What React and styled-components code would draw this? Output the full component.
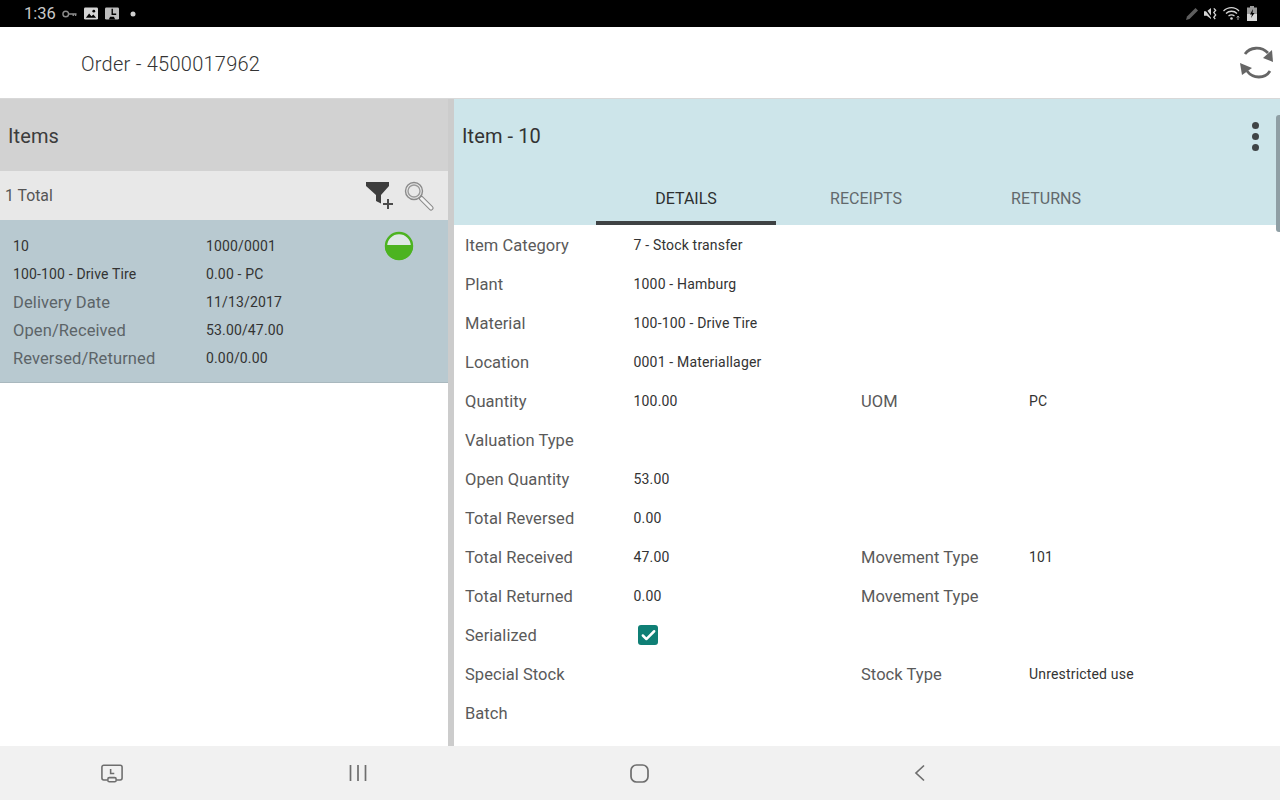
import React from "react";
import styled, { createGlobalStyle } from "styled-components";
import { Check } from "lucide-react";

const Global = createGlobalStyle`
  html, body { margin: 0; padding: 0; height: 100%; overflow: hidden; background: #fff; }
  body { font-family: Roboto, "Liberation Sans", sans-serif; }
`;

const Page = styled.div`
  width: 1280px;
  height: 800px;
  display: flex;
  flex-direction: column;
  overflow: hidden;
`;

const StatusBar = styled.div`
  height: 27px;
  flex: none;
  background: #000;
  display: flex;
  align-items: center;
  justify-content: space-between;
  padding: 0 23px 0 24px;
  color: #c9c9c9;
`;
const StatusGroup = styled.div`
  display: flex;
  align-items: center;
  gap: ${(p) => p.$gap || 6}px;
`;
const Clock = styled.span`
  font-size: 16.5px;
`;

const TopBar = styled.div`
  height: 71px;
  flex: none;
  background: #fff;
  border-bottom: 1px solid #d8d8d8;
  display: flex;
  align-items: center;
  justify-content: space-between;
  padding: 0 6px 0 81px;
`;
const OrderTitle = styled.div`
  font-size: 20px;
  font-weight: 300;
  color: #333;
  letter-spacing: 0.25px;
  padding-top: 2px;
`;

const Main = styled.div`
  flex: 1;
  min-height: 0;
  display: flex;
`;
const LeftPane = styled.div`
  width: 448px;
  flex: none;
  border-right: 6px solid #cccccc;
`;
const ItemsHead = styled.div`
  height: 72px;
  box-sizing: border-box;
  padding: 2px 0 0 8px;
  background: #d2d2d2;
  display: flex;
  align-items: center;
  font-size: 20px;
  color: #3c3c3c;
  letter-spacing: 0.1px;
`;
const ToolRow = styled.div`
  height: 49px;
  background: #e8e8e8;
  display: flex;
  align-items: center;
  justify-content: space-between;
  padding: 0 14px 0 5px;
  font-size: 15.8px;
  color: #555;
`;
const ToolIcons = styled.div`
  display: flex;
  align-items: center;
  gap: 9px;
  svg {
    display: block;
  }
`;
const ItemCard = styled.div`
  height: 163px;
  box-sizing: border-box;
  background: #b8c9d0;
  border-bottom: 1px solid #a9b8be;
  padding: 12px 0 0 13px;
  display: grid;
  grid-template-columns: 193px 179px 1fr;
  grid-auto-rows: 28px;
  align-items: center;
  font-size: 14px;
  letter-spacing: 0.15px;
  color: #333;
`;
const CardLabel = styled.span`
  font-size: 16.5px;
  letter-spacing: 0.1px;
  color: #5c6468;
`;
const StatusDot = styled.svg`
  display: block;
  margin-left: -1px;
`;

const RightPane = styled.div`
  flex: 1;
  min-width: 0;
  display: flex;
  flex-direction: column;
  position: relative;
`;
const ItemHead = styled.div`
  height: 126px;
  flex: none;
  background: #cde5ea;
  display: flex;
  flex-direction: column;
`;
const ItemHeadTop = styled.div`
  height: 74px;
  display: flex;
  align-items: center;
  justify-content: space-between;
  padding: 0 21px 0 8px;
  font-size: 20px;
  letter-spacing: 0.1px;
  color: #333;
`;
const Dots = styled.div`
  display: flex;
  flex-direction: column;
  gap: 4px;
  span {
    width: 7px;
    height: 7px;
    border-radius: 50%;
    background: #3f4446;
  }
`;
const Tabs = styled.div`
  height: 52px;
  display: flex;
  padding-left: 142px;
`;
const Tab = styled.div`
  width: 180px;
  box-sizing: border-box;
  display: flex;
  align-items: center;
  justify-content: center;
  padding-top: 2px;
  font-size: 16px;
  color: ${(p) => (p.$active ? "#2c2f30" : "#62696c")};
  border-bottom: 4px solid ${(p) => (p.$active ? "#3f4244" : "transparent")};
`;
const Details = styled.div`
  flex: 1;
  min-height: 0;
  overflow: hidden;
  padding: 1px 0 0 11px;
`;
const Row = styled.div`
  height: 39px;
  display: grid;
  grid-template-columns: 168.5px 227.5px 168px 1fr;
  align-items: center;
`;
const Label = styled.span`
  font-size: 16.5px;
  letter-spacing: 0.05px;
  color: #5a5a5a;
`;
const Value = styled.span`
  font-size: 14px;
  letter-spacing: 0.18px;
  color: #333;
  margin-top: -1px;
`;
const CheckBox = styled.span`
  width: 20px;
  height: 20px;
  margin: -1px 0 0 4.5px;
  border-radius: 3px;
  background: #0f7f75;
  display: flex;
  align-items: center;
  justify-content: center;
  color: #fff;
`;
const Scrollbar = styled.div`
  position: absolute;
  right: 0;
  top: 16px;
  width: 4px;
  height: 117px;
  border-radius: 3px 0 0 3px;
  background: #8f9fa5;
`;

const NavBar = styled.div`
  height: 54px;
  flex: none;
  background: #f1f1f1;
  display: grid;
  grid-template-columns: 224px 268px 294px 268px 1fr;
  align-items: center;
`;
const NavSlot = styled.div`
  display: flex;
  justify-content: center;
`;

const rows = [
  ["Item Category", "7 - Stock transfer"],
  ["Plant", "1000 - Hamburg"],
  ["Material", "100-100 - Drive Tire"],
  ["Location", "0001 - Materiallager"],
  ["Quantity", "100.00", "UOM", "PC"],
  ["Valuation Type", ""],
  ["Open Quantity", "53.00"],
  ["Total Reversed", "0.00"],
  ["Total Received", "47.00", "Movement Type", "101"],
  ["Total Returned", "0.00", "Movement Type", ""],
  ["Serialized", "check"],
  ["Special Stock", "", "Stock Type", "Unrestricted use"],
  ["Batch", ""],
  ["Bulk", ""],
];

function StatusLeftIcons() {
  return (
    <StatusGroup $gap={7}>
      <svg width="15" height="10" viewBox="0 0 16 10" fill="none" stroke="#8c8c8c" strokeWidth="1.5">
        <circle cx="4" cy="5" r="3" />
        <path d="M7 5h8.500M12 5v2M14.500 5v2" />
      </svg>
      <svg width="14" height="13" viewBox="0 0 15 13">
        <rect width="15" height="13" rx="1.500" fill="#d4d4d4" />
        <path d="M2 11l3.500-4.500 2.500 3 2-2 3 3.500z" fill="#000" />
        <circle cx="10.500" cy="4" r="1.500" fill="#000" />
      </svg>
      <svg width="14" height="13" viewBox="0 0 15 13">
        <rect width="15" height="13" rx="1.500" fill="#bdbdbd" />
        <path d="M7 1.500h1.500v5H12v1.500H7z" fill="#000" />
        <path d="M4 13l1.500-3h4L11 13z" fill="#000" />
      </svg>
      <svg width="6" height="6" viewBox="0 0 6 6" style={{ marginLeft: 4 }}>
        <circle cx="3" cy="3" r="2.500" fill="#d0d0d0" />
      </svg>
    </StatusGroup>
  );
}

function StatusRightIcons() {
  return (
    <StatusGroup $gap={5}>
      <svg width="14" height="14" viewBox="0 0 14 14">
        <path d="M1 13l1-3.500L10.500 1 13 3.500 4.500 12z" fill="#5e5e5e" />
      </svg>
      <svg width="14" height="15" viewBox="0 0 15 14">
        <path d="M0 4.500h3L7.500 1v12L3 9.500H0z" fill="#d4d4d4" />
        <path d="M0.500 1l9 12" stroke="#000" strokeWidth="1.500" />
        <path d="M10.500 1.500l2 2-2 2.500 2 2.500-2 2.500 1.500 2" fill="none" stroke="#d4d4d4" strokeWidth="1.400" />
      </svg>
      <svg width="19" height="15" viewBox="0 0 19 15" fill="none" stroke="#d4d4d4" strokeWidth="1.300">
        <path d="M0.500 5C5 0.500 12 0.500 16 5M3 7.500c3-3 8-3 11 0M5.500 10c2-1.500 4-1.500 6 0" />
        <circle cx="8.500" cy="12.500" r="1.300" fill="#d4d4d4" stroke="none" />
        <path d="M15 14v-4M13.800 11.500l1.200-1.500 1.200 1.500" stroke="#a0a0a0" strokeWidth="1" />
      </svg>
      <svg width="10" height="15" viewBox="0 0 10 15">
        <path d="M3 0h4v1.500h3V15H0V1.500h3z" fill="#9a9a9a" />
        <path d="M0 8h10v7H0z" fill="#d8d8d8" />
        <path d="M6 3L3 8.500h2L4 12l3.500-5h-2z" fill="#000" />
      </svg>
    </StatusGroup>
  );
}

function SyncIcon() {
  return (
    <svg width="34" height="34" viewBox="0 0 34 34" fill="none" stroke="#666" strokeWidth="2.800">
      <path d="M5 8C10 1 21 0 28 7" />
      <path d="M32 4l1 12-10-4z" fill="#666" stroke="none" />
      <path d="M30 25C25 33 13 33 7 25" />
      <path d="M0 17l2 12 10-7z" fill="#666" stroke="none" />
    </svg>
  );
}

function FilterIcon() {
  return (
    <svg width="30" height="30" viewBox="0 0 30 30">
      <path d="M1 1h23v4l-8 9v8.500l-5-2.500v-6L1 5z" fill="#3d3d3d" />
      <path d="M23 18v10M18 23h10" stroke="#4b4b4b" strokeWidth="2" />
    </svg>
  );
}

function LensIcon() {
  return (
    <svg width="30" height="30" viewBox="0 0 30 30" fill="none">
      <path d="M17 17l10 10" stroke="#8a8a8a" strokeWidth="5" strokeLinecap="round" />
      <path d="M17.500 17.500l9.500 9.500" stroke="#f2f2f2" strokeWidth="3" strokeLinecap="round" />
      <circle cx="10" cy="10" r="8.500" stroke="#8a8a8a" strokeWidth="1.400" fill="#e8e8e8" />
      <circle cx="10" cy="10" r="6" stroke="#9a9a9a" strokeWidth="1.400" />
    </svg>
  );
}

function DetailRow({ row }) {
  const [label, value, label2, value2] = row;
  return (
    <Row>
      <Label>{label}</Label>
      {value === "check" ? (
        <CheckBox>
          <Check size={17} strokeWidth={3.5} />
        </CheckBox>
      ) : (
        <Value>{value}</Value>
      )}
      <Label>{label2}</Label>
      <Value>{value2}</Value>
    </Row>
  );
}

export default function App() {
  return (
    <Page>
      <Global />
      <StatusBar>
        <StatusGroup>
          <Clock>1:36</Clock>
          <StatusLeftIcons />
        </StatusGroup>
        <StatusRightIcons />
      </StatusBar>
      <TopBar>
        <OrderTitle>Order - 4500017962</OrderTitle>
        <SyncIcon />
      </TopBar>
      <Main>
        <LeftPane>
          <ItemsHead>Items</ItemsHead>
          <ToolRow>
            <span>1 Total</span>
            <ToolIcons>
              <FilterIcon />
              <LensIcon />
            </ToolIcons>
          </ToolRow>
          <ItemCard>
            <span>10</span>
            <span>1000/0001</span>
            <StatusDot width="30" height="30" viewBox="0 0 30 30">
              <circle cx="15" cy="15" r="13" fill="#dfe8e6" stroke="#4cb320" strokeWidth="2.400" />
              <path d="M1 14h28v1a14 14 0 0 1-28 0z" fill="#4cb320" />
            </StatusDot>
            <span>100-100 - Drive Tire</span>
            <span>0.00 - PC</span>
            <span />
            <CardLabel>Delivery Date</CardLabel>
            <span>11/13/2017</span>
            <span />
            <CardLabel>Open/Received</CardLabel>
            <span>53.00/47.00</span>
            <span />
            <CardLabel>Reversed/Returned</CardLabel>
            <span>0.00/0.00</span>
          </ItemCard>
        </LeftPane>
        <RightPane>
          <ItemHead>
            <ItemHeadTop>
              Item - 10
              <Dots>
                <span />
                <span />
                <span />
              </Dots>
            </ItemHeadTop>
            <Tabs>
              <Tab $active>DETAILS</Tab>
              <Tab>RECEIPTS</Tab>
              <Tab>RETURNS</Tab>
            </Tabs>
          </ItemHead>
          <Details>
            {rows.map((r) => (
              <DetailRow key={r[0]} row={r} />
            ))}
          </Details>
          <Scrollbar />
        </RightPane>
      </Main>
      <NavBar>
        <NavSlot>
          <svg width="22" height="19" viewBox="0 0 24 20" fill="none" stroke="#6e6e6e" strokeWidth="1.700">
            <path d="M7 17H3a2 2 0 0 1-2-2V3a2 2 0 0 1 2-2h18a2 2 0 0 1 2 2v12a2 2 0 0 1-2 2h-4" />
            <rect x="7.500" y="14.500" width="9" height="4.500" rx="1.500" />
            <path d="M10.500 5v5h4" />
          </svg>
        </NavSlot>
        <NavSlot>
          <svg width="18" height="18" viewBox="0 0 18 18" stroke="#6e6e6e" strokeWidth="1.700">
            <path d="M1.500 1v16M9 1v16M16.500 1v16" />
          </svg>
        </NavSlot>
        <NavSlot>
          <svg width="19" height="19" viewBox="0 0 19 19" fill="none" stroke="#6e6e6e" strokeWidth="1.700">
            <rect x="1" y="1" width="17" height="17" rx="5.500" />
          </svg>
        </NavSlot>
        <NavSlot>
          <svg width="12" height="18" viewBox="0 0 12 18" fill="none" stroke="#6e6e6e" strokeWidth="1.700">
            <path d="M10 1.500L2 9l8 7.500" />
          </svg>
        </NavSlot>
        <span />
      </NavBar>
    </Page>
  );
}
